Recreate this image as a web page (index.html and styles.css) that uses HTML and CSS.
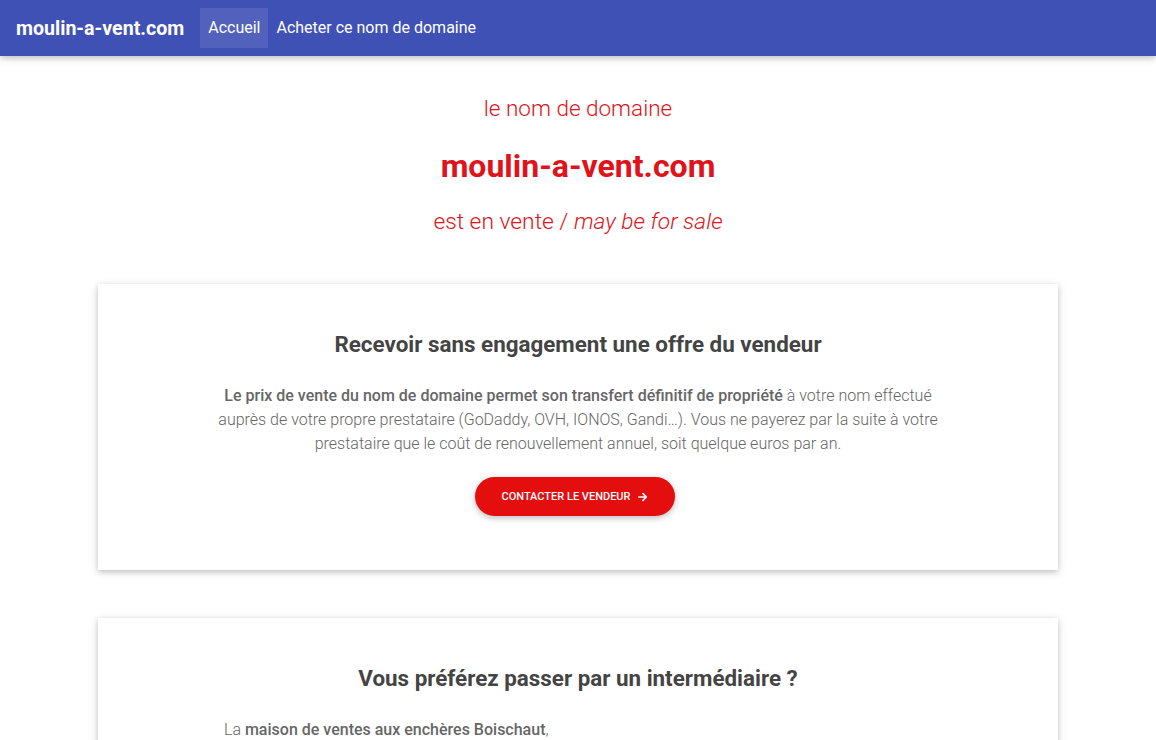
FILE: index.html
```html
<!DOCTYPE html>
<html lang="fr">
<head>
<meta charset="utf-8">
<title>moulin-a-vent.com</title>
<link rel="stylesheet" href="styles.css">
</head>
<body>
<nav class="navbar">
  <a class="brand" href="#">moulin-a-vent.com</a>
  <ul class="nav">
    <li><a class="nav-link active" href="#">Accueil</a></li>
    <li><a class="nav-link" href="#">Acheter ce nom de domaine</a></li>
  </ul>
</nav>
<header class="hero">
  <p class="hero-sub">le nom de domaine</p>
  <h1 class="hero-title">moulin-a-vent.com</h1>
  <p class="hero-sub hero-sale">est en vente / <em>may be for sale</em></p>
</header>
<main class="container">
  <section class="card">
    <h2 class="card-title">Recevoir sans engagement une offre du vendeur</h2>
    <p class="card-text center"><strong>Le prix de vente du nom de domaine permet son transfert définitif de propriété</strong> à votre nom effectué auprès de votre propre prestataire (GoDaddy, OVH, IONOS, Gandi…). Vous ne payerez par la suite à votre prestataire que le coût de renouvellement annuel, soit quelque euros par an.</p>
    <div class="btn-row">
      <a class="btn" href="#">Contacter le vendeur
        <svg class="arrow" viewBox="0 0 12 12" width="10" height="10"><path d="M1 6h9M6 2l4 4-4 4" fill="none" stroke="#fff" stroke-width="2" stroke-linecap="round" stroke-linejoin="round"/></svg>
      </a>
    </div>
  </section>
  <section class="card">
    <h2 class="card-title">Vous préférez passer par un intermédiaire ?</h2>
    <p class="card-text left">La <strong>maison de ventes aux enchères Boischaut</strong>,</p>
  </section>
</main>
</body>
</html>
```
FILE: styles.css
```css
html, body {
  margin: 0;
  padding: 0;
}
body {
  font-family: Roboto, "Liberation Sans", sans-serif;
  background: #fff;
  color: #666;
}
.navbar {
  height: 56px;
  background: #3f51b5;
  display: flex;
  align-items: center;
  padding: 0 16px;
  box-shadow: 0 2px 5px rgba(0,0,0,0.16), 0 2px 10px rgba(0,0,0,0.12);
  position: relative;
  z-index: 2;
}
.brand {
  color: #fff;
  font-size: 19.6px;
  font-weight: 700;
  text-decoration: none;
  margin-right: 16px;
}
.nav {
  list-style: none;
  margin: 0;
  padding: 0;
  display: flex;
}
.nav-link {
  display: block;
  color: #fff;
  text-decoration: none;
  font-size: 16px;
  line-height: 40px;
  padding: 0 8px;
}
.nav-link.active {
  background: rgba(255,255,255,0.1);
}
.hero {
  text-align: center;
  color: #e0121a;
  padding-top: 36px;
}
.hero-sub {
  margin: 0;
  font-size: 22.5px;
  font-weight: 300;
  line-height: 32px;
}
.hero-title {
  margin: 24px 0 22px;
  font-size: 32px;
  font-weight: 700;
  line-height: 36px;
}
.hero-sale {
  font-size: 22.8px;
}
.hero-sale em {
  font-style: italic;
}
.container {
  width: 960px;
  margin: 46px auto 0;
  display: flex;
  flex-direction: column;
  gap: 48px;
}
.card {
  background: #fff;
  box-shadow: 0 2px 5px rgba(0,0,0,0.16), 0 2px 10px rgba(0,0,0,0.12);
  padding: 46px 120px 54px;
}
.card-title {
  margin: 0 0 26px;
  text-align: center;
  font-size: 22.4px;
  font-weight: 700;
  color: #444;
  line-height: 28px;
}
.card-text {
  margin: 0;
  font-size: 16px;
  font-weight: 300;
  line-height: 24px;
  color: #666;
}
.card-text strong {
  font-weight: 500;
}
.center { text-align: center; }
.left { text-align: left; padding-left: 6px; }
.btn-row {
  display: flex;
  justify-content: center;
  margin-top: 21px;
}
.btn {
  display: inline-flex;
  align-items: center;
  gap: 8px;
  height: 39px;
  padding: 0 27px;
  margin-right: 6px;
  background: #e40e0e;
  border-radius: 20px;
  color: #fff;
  font-size: 11px;
  font-weight: 500;
  text-transform: uppercase;
  text-decoration: none;
  box-shadow: 0 2px 5px rgba(0,0,0,0.16), 0 2px 10px rgba(0,0,0,0.12);
}
.arrow { display: block; }
```
